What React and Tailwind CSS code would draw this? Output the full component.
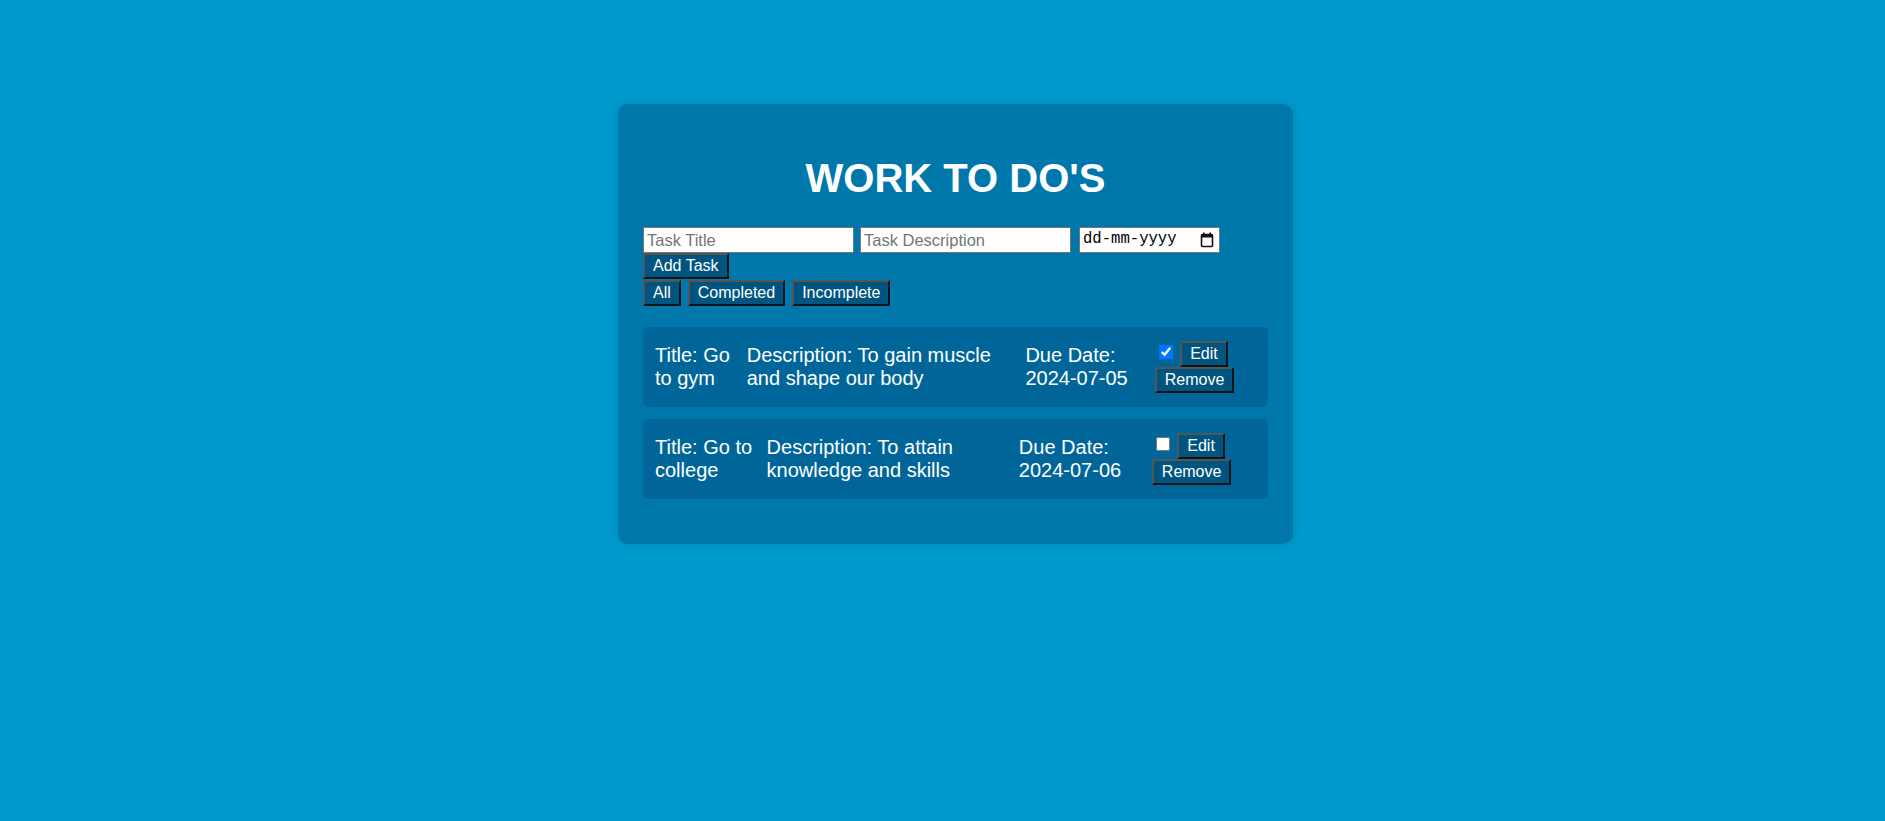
import { useState } from "react";

const tasks = [
  {
    id: 1,
    title: "Go to gym",
    description: "To gain muscle and shape our body",
    dueDate: "2024-07-05",
    completed: true,
  },
  {
    id: 2,
    title: "Go to college",
    description: "To attain knowledge and skills",
    dueDate: "2024-07-06",
    completed: false,
  },
];

const btn =
  "inline-block h-[26px] px-[8px] text-[16px] leading-[18px] text-white bg-[#005580] border-2 border-[#555555] border-b-[#141414] border-r-[#141414]";

function CalendarIcon() {
  return (
    <svg width="14" height="16" viewBox="0 0 14 16" fill="none">
      <rect x="3" y="0.5" width="1.6" height="3" fill="#111" />
      <rect x="9.4" y="0.5" width="1.6" height="3" fill="#111" />
      <rect x="1.5" y="2.5" width="11" height="12" rx="1" stroke="#111" strokeWidth="1.6" />
      <rect x="1.5" y="2.5" width="11" height="3" fill="#111" />
    </svg>
  );
}

export default function App() {
  const [items, setItems] = useState(tasks);

  const toggle = (id) =>
    setItems(items.map((t) => (t.id === id ? { ...t, completed: !t.completed } : t)));

  return (
    <div
      className="min-h-screen bg-[#0099cc] flex justify-center items-start pt-[104px] pl-[26px]"
      style={{ fontFamily: '"Liberation Sans", Arial, sans-serif' }}
    >
      <div className="w-[675px] bg-[#0077aa] rounded-[10px] pt-[25px] px-[25px] pb-[45px] shadow-[0_0_8px_rgba(0,0,0,0.12)]">
        <h1 className="text-[40px] leading-[46px] font-bold text-center text-white mt-[26px] mb-[26px]">
          WORK TO DO'S
        </h1>

        <div className="flex items-start">
          <input
            placeholder="Task Title"
            className="w-[211px] h-[26px] bg-white border border-[#767676] px-[3px] text-[16.5px] text-black placeholder:text-[#757575] outline-none"
          />
          <input
            placeholder="Task Description"
            className="w-[211px] h-[26px] ml-[6px] bg-white border border-[#767676] px-[3px] text-[16.5px] text-black placeholder:text-[#757575] outline-none"
          />
          <div className="w-[141px] h-[26px] ml-[8px] bg-white border border-[#767676] pl-[3px] pr-[5px] flex items-center justify-between">
            <span
              className="text-[15.6px] text-black"
              style={{ fontFamily: '"Liberation Mono", monospace' }}
            >
              dd-mm-yyyy
            </span>
            <CalendarIcon />
          </div>
        </div>

        <div>
          <button className={btn}>Add Task</button>
        </div>

        <div className="flex gap-[7px] mt-[1px]">
          <button className={btn}>All</button>
          <button className={btn}>Completed</button>
          <button className={btn}>Incomplete</button>
        </div>

        <div className="flex flex-col gap-[12px] mt-[21px]">
          {items.map((task) => (
            <div
              key={task.id}
              className="flex items-center justify-between rounded-[5px] bg-[#006699] px-[12px] py-[14px] text-[20px] leading-[23px] text-white"
            >
              <p>Title: {task.title}</p>
              <p>Description: {task.description}</p>
              <p>Due Date: {task.dueDate}</p>
              <div className="basis-[155px] text-[16px] leading-[26px]">
                <input
                  type="checkbox"
                  checked={task.completed}
                  onChange={() => toggle(task.id)}
                  className="m-[3px_3px_3px_4px] w-[14px] h-[14px]"
                />{" "}
                <button className={btn}>Edit</button>{" "}
                <button className={btn}>Remove</button>
              </div>
            </div>
          ))}
        </div>
      </div>
    </div>
  );
}
